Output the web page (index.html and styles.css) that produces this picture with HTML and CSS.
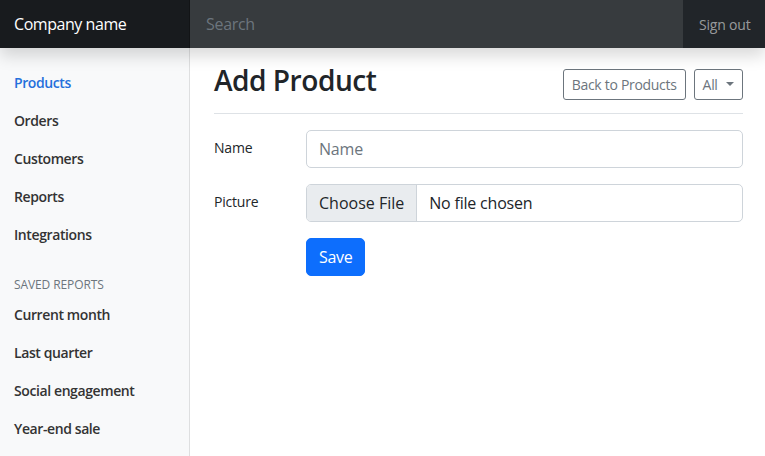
FILE: index.html
```html
<!DOCTYPE html>
<html lang="en">
<head>
<meta charset="utf-8">
<title>Add Product</title>
<link rel="stylesheet" href="styles.css">
</head>
<body>
<header class="navbar">
  <a class="brand" href="#">Company name</a>
  <input class="search" type="text" placeholder="Search" aria-label="Search">
  <div class="navbar-nav">
    <a class="signout" href="#">Sign out</a>
  </div>
</header>
<div class="layout">
  <nav class="sidebar">
    <ul class="nav first">
      <li><a class="nav-link active" href="#">Products</a></li>
      <li><a class="nav-link" href="#">Orders</a></li>
      <li><a class="nav-link" href="#">Customers</a></li>
      <li><a class="nav-link" href="#">Reports</a></li>
      <li><a class="nav-link" href="#">Integrations</a></li>
    </ul>
    <h6 class="sidebar-heading">Saved reports</h6>
    <ul class="nav">
      <li><a class="nav-link" href="#">Current month</a></li>
      <li><a class="nav-link" href="#">Last quarter</a></li>
      <li><a class="nav-link" href="#">Social engagement</a></li>
      <li><a class="nav-link" href="#">Year-end sale</a></li>
    </ul>
  </nav>
  <main class="main">
    <div class="page-header">
      <h1 class="title">Add Product</h1>
      <div class="toolbar">
        <button class="btn btn-outline" type="button">Back to Products</button>
        <button class="btn btn-outline dropdown-toggle" type="button">All</button>
      </div>
    </div>
    <form class="form">
      <div class="form-row">
        <label class="col-label" for="name">Name</label>
        <div class="col-field"><input class="form-control" id="name" type="text" placeholder="Name"></div>
      </div>
      <div class="form-row">
        <label class="col-label" for="picture">Picture</label>
        <div class="col-field"><input class="form-control" id="picture" type="file"></div>
      </div>
      <div class="form-row">
        <div class="col-label"></div>
        <div class="col-field"><button class="btn btn-primary" type="submit">Save</button></div>
      </div>
    </form>
  </main>
</div>
</body>
</html>
```
FILE: styles.css
```css
* { box-sizing: border-box; }

html, body { height: 100%; }

body {
  margin: 0;
  font-family: "Open Sans", "Noto Sans", sans-serif;
  font-size: 16px;
  line-height: 1.5;
  color: #212529;
  background: #fff;
}

a { text-decoration: none; }

.navbar {
  position: relative;
  z-index: 3;
  display: flex;
  align-items: stretch;
  height: 48px;
  background: #212529;
  box-shadow: 0 8px 16px rgba(0, 0, 0, 0.15);
}

.brand {
  flex: 0 0 190px;
  padding: 12px 14px;
  font-size: 16px;
  font-weight: 500;
  letter-spacing: -0.45px;
  color: #fff;
  background: rgba(0, 0, 0, 0.25);
  box-shadow: inset -1px 0 0 rgba(0, 0, 0, 0.25);
}

.search {
  flex: 1 1 auto;
  min-width: 0;
  padding: 12px 16px;
  font: inherit;
  font-size: 16px;
  letter-spacing: -0.3px;
  color: #fff;
  background: rgba(255, 255, 255, 0.1);
  border: 0;
  border-radius: 0;
  outline: none;
}

.search::placeholder { color: #6c757d; }

.navbar-nav {
  display: flex;
  align-items: center;
  flex: 0 0 82px;
}

.signout {
  padding: 0 14px 0 16px;
  font-size: 14px;
  letter-spacing: -0.2px;
  color: rgba(255, 255, 255, 0.55);
  white-space: nowrap;
}

.layout {
  display: flex;
  min-height: calc(100% - 48px);
}

.sidebar {
  flex: 0 0 190px;
  background: #f8f9fa;
  box-shadow: inset -1px 0 0 rgba(0, 0, 0, 0.1);
  padding-top: 16px;
}

.nav {
  list-style: none;
  margin: 0;
  padding: 0;
}

.nav-link {
  display: block;
  padding: 8px 14px;
  font-size: 14px;
  line-height: 22px;
  font-weight: 600;
  letter-spacing: -0.4px;
  color: #333;
}

.nav-link.active { color: #2470dc; }

.sidebar-heading {
  margin: 24px 0 3px;
  padding: 0 14px;
  font-size: 12px;
  font-weight: 400;
  line-height: 14.5px;
  letter-spacing: -0.1px;
  text-transform: uppercase;
  color: #6c757d;
}

.main {
  flex: 1 1 auto;
  padding: 0 22px 0 24px;
}

.page-header {
  display: flex;
  justify-content: space-between;
  align-items: center;
  padding-top: 16px;
  padding-bottom: 8px;
  margin-bottom: 16px;
  border-bottom: 1px solid #dee2e6;
}

.title {
  margin: 0 0 8px;
  font-size: 28.1px;
  font-weight: 600;
  letter-spacing: -0.5px;
  line-height: 33px;
}

.toolbar {
  display: flex;
  gap: 8px;
}

.btn {
  display: inline-block;
  font-family: inherit;
  font-weight: 400;
  text-align: center;
  cursor: pointer;
  background: transparent;
  border: 1px solid transparent;
}

.btn-outline {
  padding: 4px 8px;
  font-size: 14px;
  line-height: 21px;
  letter-spacing: -0.3px;
  color: #6c757d;
  border-color: #6c757d;
  border-radius: 3px;
}

.dropdown-toggle::after {
  content: "";
  display: inline-block;
  margin-left: 0.6em;
  vertical-align: 0.255em;
  border-top: 0.3em solid;
  border-right: 0.3em solid transparent;
  border-left: 0.3em solid transparent;
}

.btn-primary {
  padding: 6px 12px;
  font-size: 16px;
  line-height: 24px;
  letter-spacing: -0.3px;
  color: #fff;
  background: #0d6efd;
  border-color: #0d6efd;
  border-radius: 5px;
}

.form-row {
  display: flex;
  margin-bottom: 16px;
}

.col-label {
  flex: 0 0 92px;
  padding-top: 7px;
  font-size: 14px;
  line-height: 22px;
  letter-spacing: -0.2px;
}

.col-field { flex: 1 1 auto; }

.form-control {
  display: block;
  width: 100%;
  height: 38px;
  padding: 6px 12px;
  font-family: inherit;
  font-size: 16px;
  line-height: 24px;
  letter-spacing: -0.2px;
  color: #212529;
  background: #fff;
  border: 1px solid #ced4da;
  border-radius: 5px;
  overflow: hidden;
}

.form-control::placeholder { color: #6c757d; }

.form-control::file-selector-button {
  height: 36px;
  padding: 6px 12px;
  margin: -6px 12px -6px -12px;
  font: inherit;
  color: #212529;
  background: #e9ecef;
  border: 0;
  border-right: 1px solid #ced4da;
  border-radius: 0;
}
```
